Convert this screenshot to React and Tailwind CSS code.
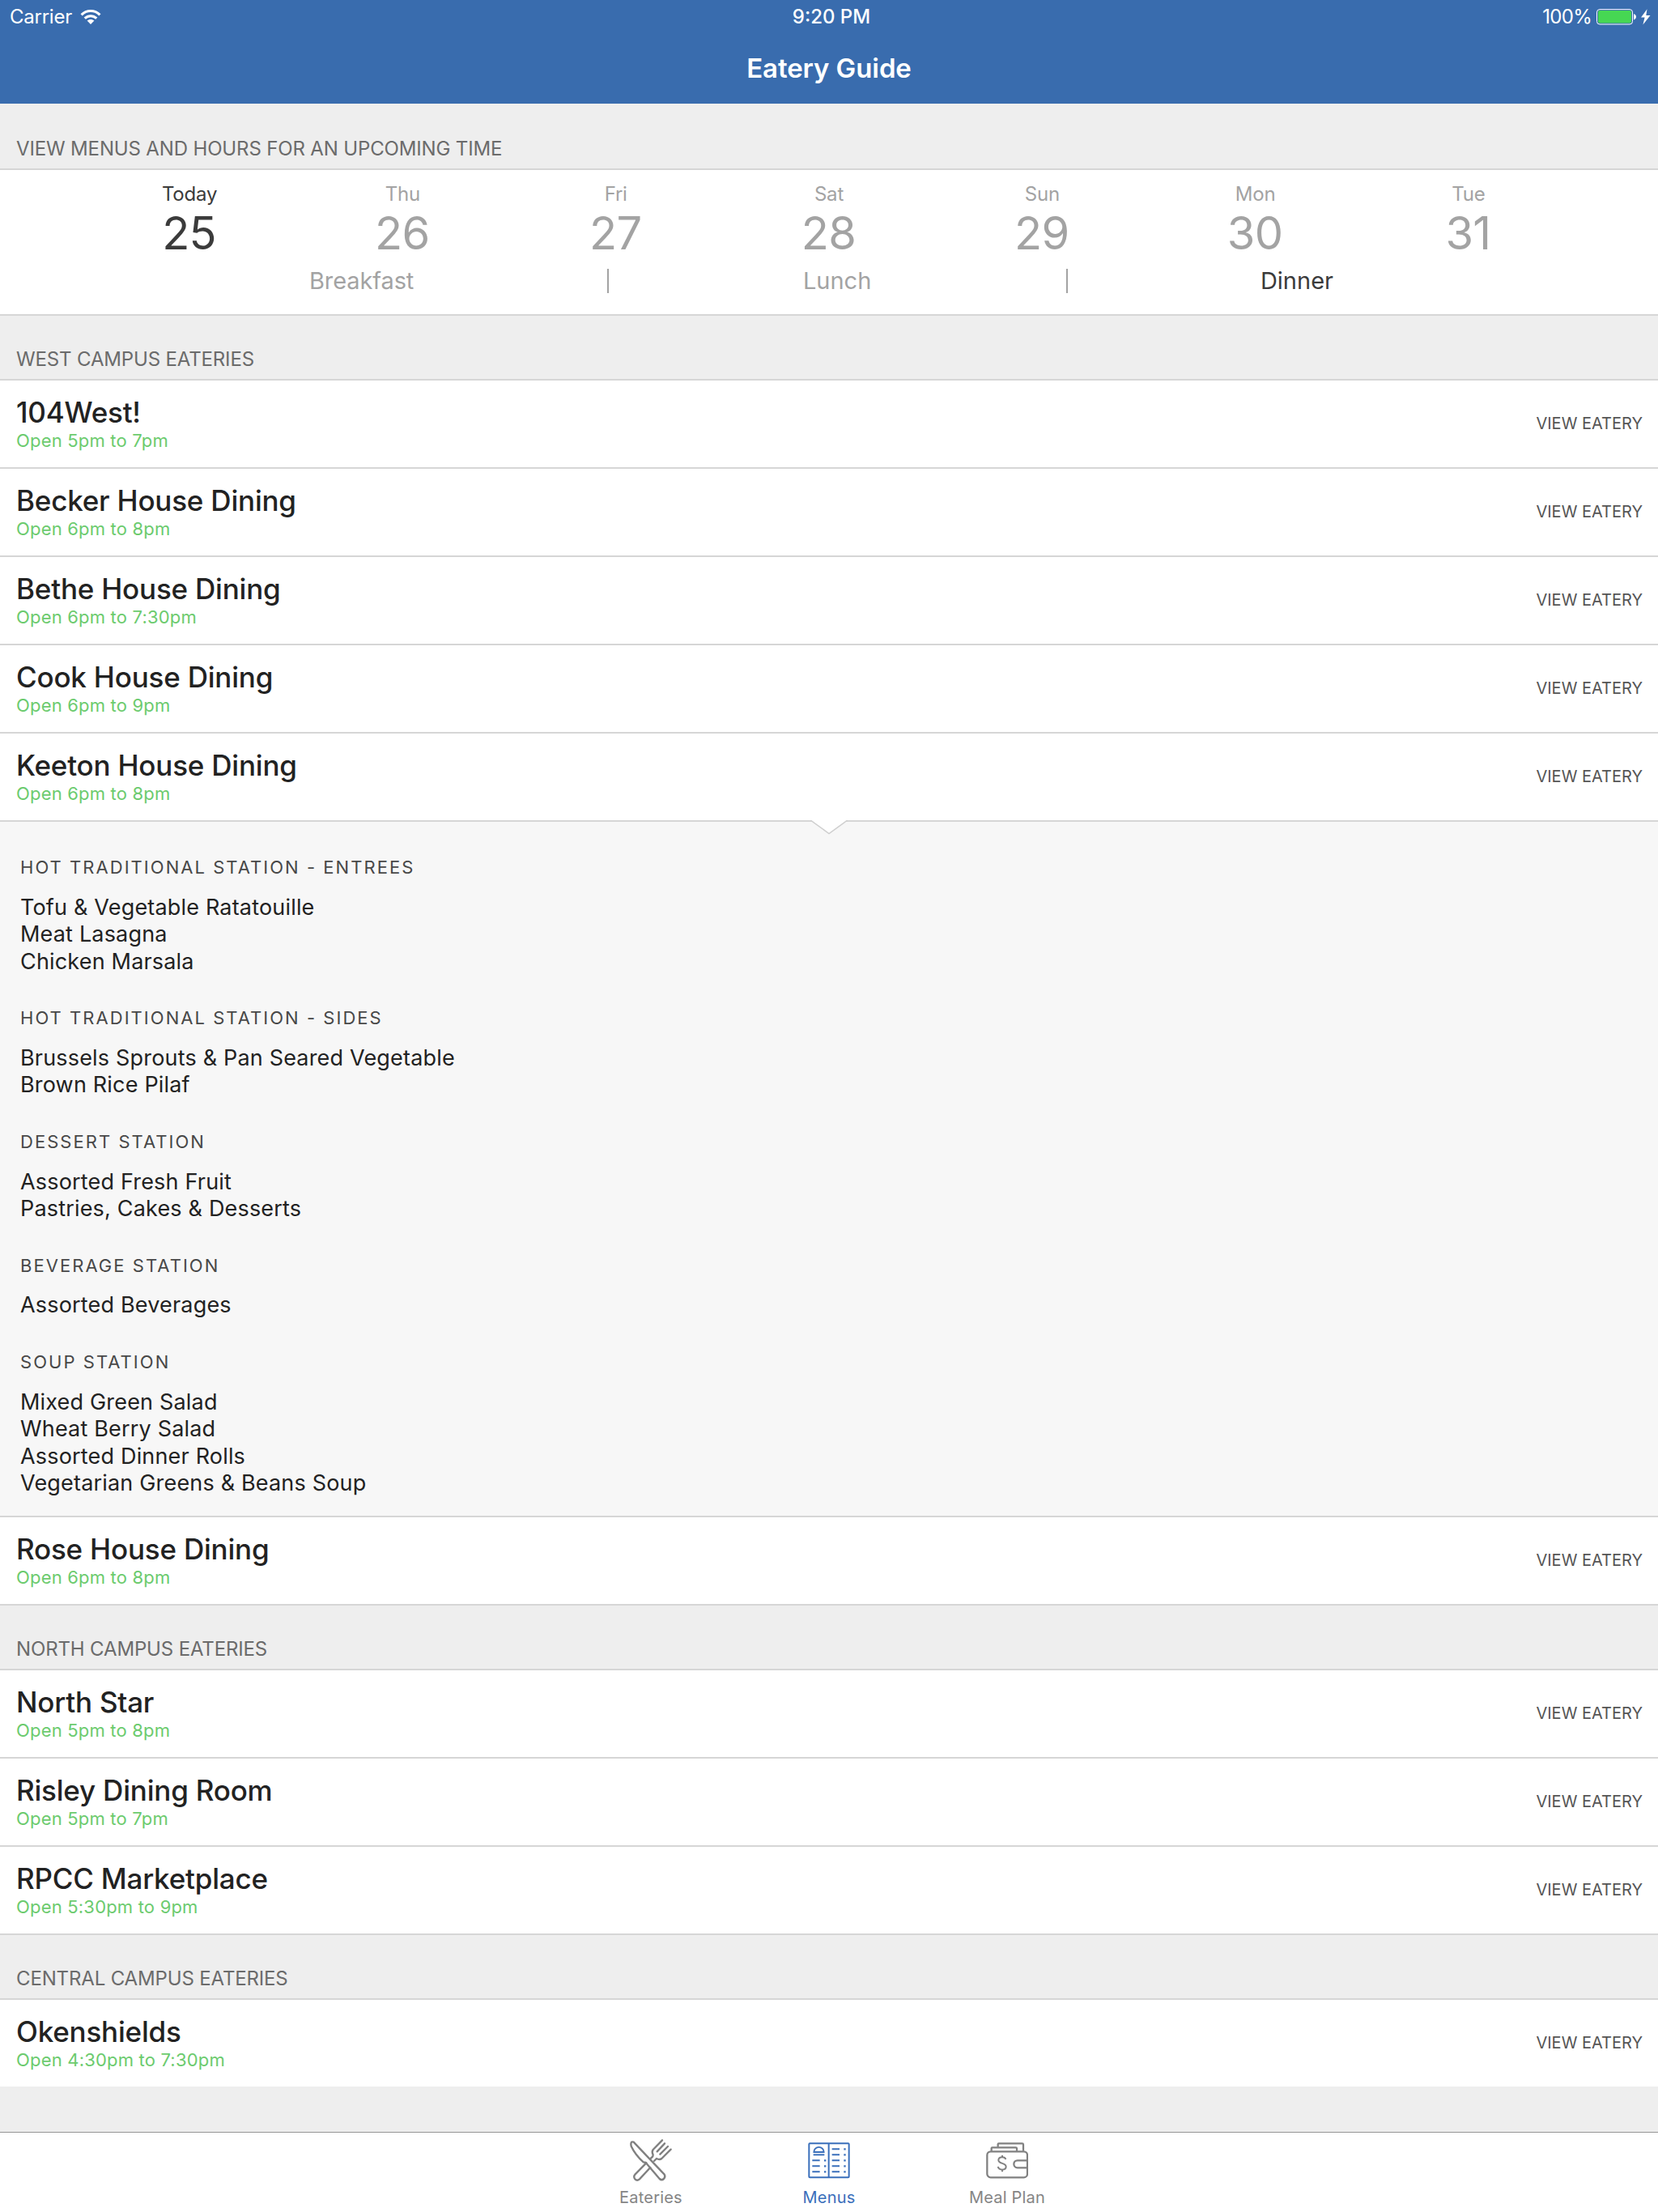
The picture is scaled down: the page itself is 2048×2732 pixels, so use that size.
const days = [
  ['Today', '25'],
  ['Thu', '26'],
  ['Fri', '27'],
  ['Sat', '28'],
  ['Sun', '29'],
  ['Mon', '30'],
  ['Tue', '31'],
];

const stations = [
  ['HOT TRADITIONAL STATION - ENTREES', ['Tofu & Vegetable Ratatouille', 'Meat Lasagna', 'Chicken Marsala']],
  ['HOT TRADITIONAL STATION - SIDES', ['Brussels Sprouts & Pan Seared Vegetable', 'Brown Rice Pilaf']],
  ['DESSERT STATION', ['Assorted Fresh Fruit', 'Pastries, Cakes & Desserts']],
  ['BEVERAGE STATION', ['Assorted Beverages']],
  ['SOUP STATION', ['Mixed Green Salad', 'Wheat Berry Salad', 'Assorted Dinner Rolls', 'Vegetarian Greens & Beans Soup']],
];

function WifiIcon() {
  return (
    <svg width="26" height="20" viewBox="0 0 26 20" fill="none" stroke="#fff" strokeWidth="3.1">
      <path d="M1.6 7.3C8 .8 18 .8 24.4 7.3" />
      <path d="M5.7 11.7C9.9 7.7 16.1 7.7 20.3 11.7" />
      <path d="M13 19 8.6 14.6C11.2 12.3 14.8 12.3 17.4 14.6Z" fill="#fff" stroke="none" />
    </svg>
  );
}

function BatteryIcon() {
  return (
    <svg width="68" height="20" viewBox="0 0 68 20">
      <rect x="0.5" y="0.6" width="44" height="18.4" rx="3.5" fill="none" stroke="#fff" />
      <rect x="2" y="2.1" width="41" height="15.4" rx="2" fill="#46d753" />
      <path d="M46 6.3C50 7 50 12.6 46 13.4Z" fill="#fff" />
      <path d="M62.5 0.3 55 10.6H59.6L57.4 19.6 66.5 8H61.3Z" fill="#fff" />
    </svg>
  );
}

function EateriesIcon() {
  return (
    <svg width="60" height="60" viewBox="0 0 180 180" fill="none" stroke="#808080" strokeWidth="7" strokeLinecap="round" strokeLinejoin="round">
      <path d="M132 16 98 51Q92 59 98 70L97 76 90 83" />
      <path d="M141 28 113 58" />
      <path d="M153 39 124 68" />
      <path d="M164 50 130 84Q122 90 111 84L102 93" />
      <path d="M73 100 32 142Q24 152 31 160 39 168 48 160L88 117" />
      <path d="M26 23 140 143Q145 152 138 159 130 166 122 159L71 99 62 97Q32 70 17 38 13 18 26 23Z" />
    </svg>
  );
}

function MenusIcon() {
  return (
    <svg width="52" height="45" viewBox="0 0 156 135" fill="none" stroke="#3a6fbb" strokeWidth="6">
      <rect x="4" y="4" width="148" height="126" rx="3" />
      <path d="M77 4V130" />
      <path d="M22 36A18.5 18.5 0 0 1 59 36Z" strokeWidth="5.5" />
      <path d="M20 46H61" strokeWidth="6" />
      <path d="M16 67H44M16 88H44M16 109H44M89 25H117M89 46H117M89 67H117M89 88H117M89 109H117" strokeWidth="6" />
      <path d="M60 67H67M60 88H67M60 109H67M133 25H140M133 46H140M133 67H140M133 88H140M133 109H140" strokeWidth="6.5" />
    </svg>
  );
}

function WalletIcon() {
  return (
    <svg width="52" height="45" viewBox="0 0 156 135" fill="none" stroke="#808080" strokeWidth="6.8" strokeLinejoin="round">
      <rect x="4" y="34" width="149" height="96" rx="13" />
      <path d="M20 32V22Q20 19 23 19H110Q114 19 114 23V32" />
      <path d="M44 17V7Q44 4 47 4H134Q138 4 138 8V32" />
      <path d="M152 67H116A13 13.5 0 0 0 116 94H152" />
      <path d="M73 63C71 56 65 55 60 55 51 55 46 60 46 66 46 81 74 74 74 90 74 97 68 101 60 101 52 101 46 97 44 90M60 48V56M60 100V109" strokeWidth="6" />
    </svg>
  );
}

function SectionHeader({ children }) {
  return (
    <div className="flex h-20 shrink-0 items-end border-b-2 border-[#d6d6d6] bg-[#eeeeee] pb-[9px] pl-[20px] text-[24px] leading-[30px] tracking-[-0.15px] text-[#6b6b6b]">
      {children}
    </div>
  );
}

function Row({ name, hours, last }) {
  return (
    <div className={'flex shrink-0 justify-between bg-white px-[20px] ' + (last ? 'h-[107px]' : 'h-[109px] border-b-2 border-[#d6d6d6]')}>
      <div className="pt-[19px]">
        <div className="text-[35px] font-medium leading-[41px] tracking-[-0.2px] text-[#222222]">{name}</div>
        <div className="text-[22px] leading-[28px] tracking-[0.19px] text-[#6ccb6e]">{hours}</div>
      </div>
      <div className="-mr-px self-center pb-[2px] text-[20px] leading-[24px] text-[#555555]">VIEW EATERY</div>
    </div>
  );
}

function Tab({ icon, label, active }) {
  return (
    <div className={'flex w-[220px] flex-col items-center ' + (active ? 'text-[#3a6fbb]' : 'text-[#858585]')}>
      <div className="flex h-[68px] items-center justify-center">{icon}</div>
      <div className="text-[20px] leading-[24px] tracking-[0.2px]">{label}</div>
    </div>
  );
}

export default function App() {
  return (
    <div className="flex h-[2732px] w-[2048px] flex-col bg-[#eeeeee] font-['Inter',sans-serif]">
      <header className="h-32 shrink-0 bg-[#396cae] text-white">
        <div className="grid h-[41px] grid-cols-3 items-center text-[24px] leading-[30px]">
          <div className="flex items-center gap-[10px] pl-[12px]">
            <span className="tracking-[-0.25px]">Carrier</span>
            <WifiIcon />
          </div>
          <div className="pl-[6px] text-center font-medium">9:20 PM</div>
          <div className="flex items-center justify-end gap-[6px] pr-[8px]">
            <span className="tracking-[-0.7px]">100%</span>
            <BatteryIcon />
          </div>
        </div>
        <h1 className="pt-[23px] text-center text-[33px] font-semibold leading-[40px] tracking-[-0.1px]">Eatery Guide</h1>
      </header>

      <div className="shrink-0 pt-[2px]">
        <SectionHeader>VIEW MENUS AND HOURS FOR AN UPCOMING TIME</SectionHeader>
      </div>
      <div className="h-[180px] shrink-0 border-b-2 border-[#d6d6d6] bg-white text-[#a3a3a3]">
        <div className="grid grid-cols-7 px-[5%] pt-[14px]">
          {days.map(([day, date], i) => (
            <div key={day} className={'text-center ' + (i === 0 ? 'text-[#3b3b3b]' : '')}>
              <div className="text-[24px] leading-[32px] tracking-[-0.2px]">{day}</div>
              <div className="pr-px text-[56px] leading-[64px] tracking-[-0.7px]">{date}</div>
            </div>
          ))}
        </div>
        <div className="flex items-center justify-between pl-[382px] pr-[401px] pt-[11px] text-[29px] leading-[30px]">
          <span className="pt-px tracking-[-0.1px]">Breakfast</span>
          <span className="relative -left-px h-[30px] w-[2px] bg-[#a3a3a3]" />
          <span className="pt-px">Lunch</span>
          <span className="relative left-px h-[30px] w-[2px] bg-[#a3a3a3]" />
          <span className="pt-px text-[#3b3b3b]">Dinner</span>
        </div>
      </div>

      <SectionHeader>WEST CAMPUS EATERIES</SectionHeader>
      <Row name="104West!" hours="Open 5pm to 7pm" />
      <Row name="Becker House Dining" hours="Open 6pm to 8pm" />
      <Row name="Bethe House Dining" hours="Open 6pm to 7:30pm" />
      <Row name="Cook House Dining" hours="Open 6pm to 9pm" />
      <Row name="Keeton House Dining" hours="Open 6pm to 8pm" />

      <div className="relative flex h-[859px] shrink-0 flex-col gap-[39.2px] border-b-2 border-[#d6d6d6] bg-[#f7f7f7] pl-[25px] pt-[42px]">
        <svg className="absolute -top-[2px] left-[1000px]" width="48" height="20" viewBox="0 0 48 20">
          <path d="M2 0 24 17 46 0Z" fill="#fff" />
          <path d="M1 1H2.5L24 16.5 45.5 1H47" fill="none" stroke="#cfcfcf" strokeWidth="1.5" />
        </svg>
        {stations.map(([title, items]) => (
          <div key={title}>
            <div className="text-[22px] leading-[28px] tracking-[2.04px] text-[#484848]">{title}</div>
            <div className="pt-[18.6px]">
              {items.map((item) => (
                <div key={item} className="text-[27px] leading-[33.5px] tracking-[0.18px] text-[#222222]">{item}</div>
              ))}
            </div>
          </div>
        ))}
      </div>

      <Row name="Rose House Dining" hours="Open 6pm to 8pm" />
      <SectionHeader>NORTH CAMPUS EATERIES</SectionHeader>
      <Row name="North Star" hours="Open 5pm to 8pm" />
      <Row name="Risley Dining Room" hours="Open 5pm to 7pm" />
      <Row name="RPCC Marketplace" hours="Open 5:30pm to 9pm" />
      <SectionHeader>CENTRAL CAMPUS EATERIES</SectionHeader>
      <Row name="Okenshields" hours="Open 4:30pm to 7:30pm" last />

      <nav className="mt-auto flex h-[99px] shrink-0 justify-center border-t border-[#959595] bg-white">
        <Tab icon={<EateriesIcon />} label="Eateries" />
        <Tab icon={<MenusIcon />} label="Menus" active />
        <Tab icon={<WalletIcon />} label="Meal Plan" />
      </nav>
    </div>
  );
}
